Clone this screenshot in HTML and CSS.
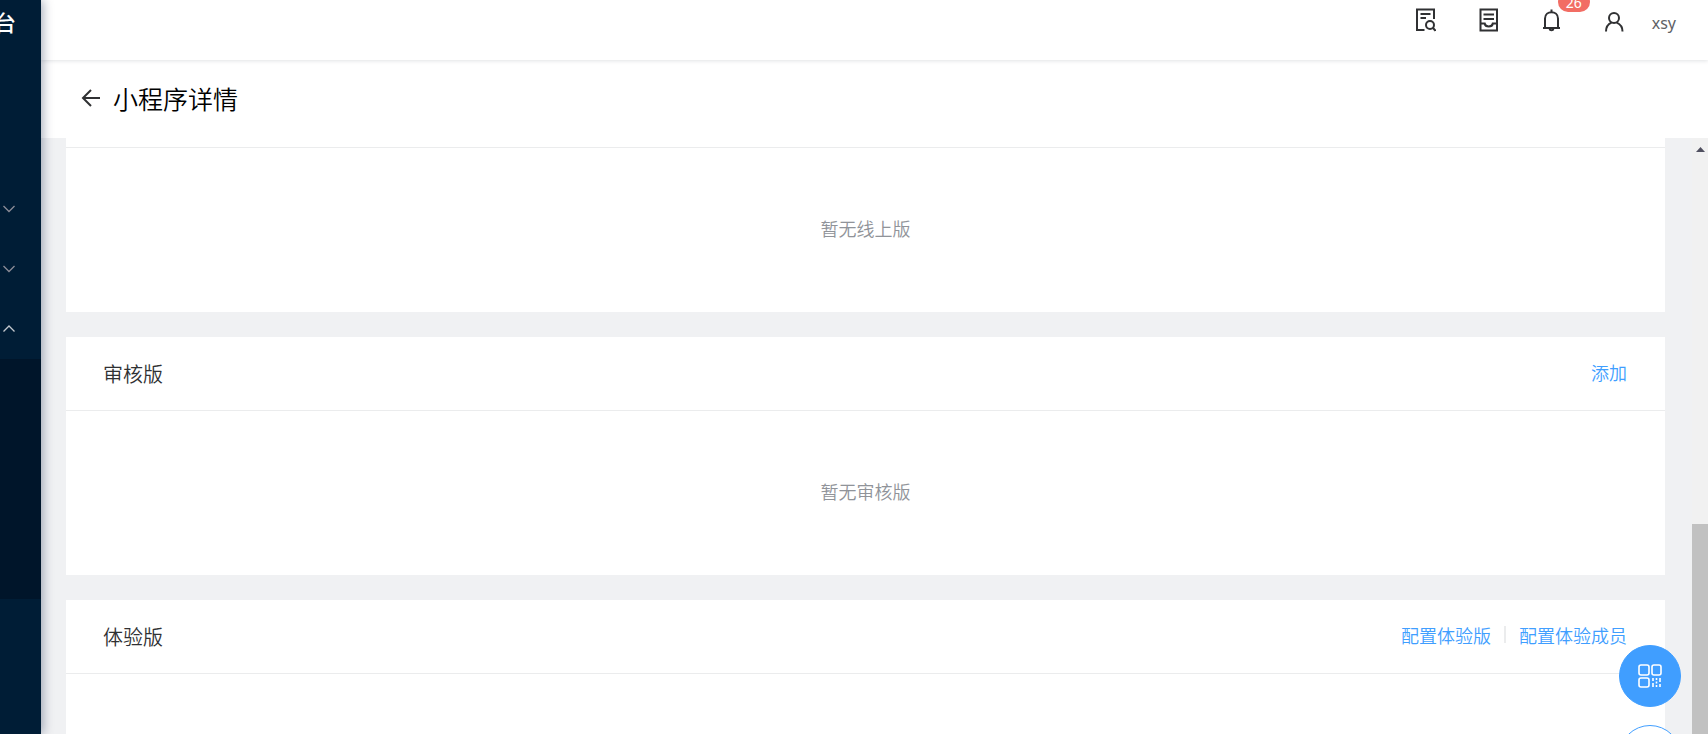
FILE: index.html
```html
<!DOCTYPE html>
<html lang="zh-CN">
<head>
  <meta charset="UTF-8">
  <title>小程序详情</title>
  <link rel="stylesheet" href="styles.css">
</head>
<body>
  <div class="layout">
    <aside class="sidebar">
      <div class="logo">台</div>
      <nav class="menu">
        <button class="menu-item" aria-expanded="false"><svg width="12" height="8" viewBox="0 0 12 8"><path d="M.5 1 6 6.500 11.500 1"/></svg></button>
        <button class="menu-item" aria-expanded="false"><svg width="12" height="8" viewBox="0 0 12 8"><path d="M.5 1 6 6.500 11.500 1"/></svg></button>
        <button class="menu-item open" aria-expanded="true"><svg width="12" height="8" viewBox="0 0 12 8"><path d="M.5 6.500 6 1l5.500 5.500"/></svg></button>
        <div class="submenu"></div>
      </nav>
    </aside>

    <div class="main">
      <header class="topbar">
        <button class="tool">
          <svg width="20" height="24" viewBox="0 0 20 24"><path d="M8.500 22H1V1.500h17V11M4.500 6h10M4.500 10H10"/><circle cx="14" cy="17" r="4"/><path d="m17 20 2.500 2.800"/></svg>
        </button>
        <button class="tool">
          <svg width="20" height="24" viewBox="0 0 20 24"><path d="M1.500 1.500h16.500v21H1.500zM4.500 6.500h10.500M4.500 11h10.500M1.500 15.500h4.200c.6 4 7.500 4 8.100 0H18"/></svg>
        </button>
        <button class="tool">
          <svg width="20" height="24" viewBox="0 0 20 24"><path d="M1 20h17M3 20v-9.500c0-8.500 13-8.500 13 0V20M9.500 4V1.500M7.500 20.500c.4 2.300 3.600 2.300 4 0"/></svg>
          <span class="badge">26</span>
        </button>
        <button class="tool">
          <svg width="20" height="24" viewBox="0 0 20 24"><circle cx="9" cy="10" r="5"/><path d="M1 23.500c0-5 2.500-7.500 5.500-8.800M17.500 23.500c0-5-2.800-7.500-5.800-8.800"/></svg>
        </button>
        <span class="user">xsy</span>
      </header>

      <div class="page-head">
        <button class="back" aria-label="返回">
          <svg width="20" height="20" viewBox="0 0 20 20"><path d="M19 10H2M10 2l-8 8 8 8"/></svg>
        </button>
        <h1>小程序详情</h1>
      </div>

      <div class="scroller">
        <div class="cards">
          <section class="card">
            <div class="card-tail"></div>
            <div class="card-body">暂无线上版</div>
          </section>

          <section class="card">
            <div class="card-head">
              <h2>审核版</h2>
              <div class="links"><a href="#">添加</a></div>
            </div>
            <div class="card-body">暂无审核版</div>
          </section>

          <section class="card">
            <div class="card-head">
              <h2>体验版</h2>
              <div class="links">
                <a href="#">配置体验版</a>
                <i class="divider"></i>
                <a href="#">配置体验成员</a>
              </div>
            </div>
            <div class="card-body"></div>
          </section>
        </div>

        <div class="scrollbar">
          <div class="arrow-up"></div>
          <div class="thumb"></div>
        </div>
      </div>
    </div>
  </div>

  <div class="float-btns">
    <button class="float-btn primary">
      <svg width="24" height="24" viewBox="0 0 24 24">
        <rect x="1" y="1" width="10" height="10" rx="2"/>
        <rect x="14" y="1" width="9" height="10" rx="2"/>
        <rect x="1" y="14" width="10" height="9" rx="2"/>
        <path d="M15 14v3M15 19v4M18.500 14v2M18.500 17.500v2M18.500 21v2M22 14v4M22 20v3"/>
      </svg>
    </button>
    <button class="float-btn"></button>
  </div>
</body>
</html>
```
FILE: styles.css
```css
* {
  box-sizing: border-box;
}

body {
  margin: 0;
  height: 100vh;
  overflow: hidden;
  font-family: "Noto Sans", "Noto Sans CJK SC", sans-serif;
  font-weight: 350;
  color: #303133;
  background: #f0f1f3;
}

button {
  padding: 0;
  border: none;
  background: none;
  font: inherit;
  cursor: pointer;
}

svg {
  display: block;
  fill: none;
  stroke: currentColor;
  stroke-width: 2;
}

h1, h2 {
  margin: 0;
  font-weight: 350;
}

a {
  color: #409eff;
  text-decoration: none;
}

.layout {
  display: flex;
  height: 100%;
}

/* sidebar */
.sidebar {
  position: relative;
  z-index: 2;
  flex: none;
  width: 41px;
  background: #001d36;
  box-shadow: 2px 0 10px rgba(0, 21, 60, 0.35);
}

.logo {
  display: flex;
  justify-content: flex-end;
  height: 179px;
  padding: 5px 25px 0 0;
  color: #fff;
  font-size: 22px;
  font-weight: 500;
}

.menu-item {
  display: flex;
  align-items: center;
  justify-content: flex-end;
  width: 100%;
  height: 60px;
  padding-right: 26px;
  color: #8b8c97;
}

.menu-item svg {
  flex: none;
  stroke-width: 1.3;
}

.menu-item.open {
  color: #c3c8ce;
}

.submenu {
  height: 240px;
  background: #00152a;
}

/* header */
.main {
  display: flex;
  flex: 1;
  flex-direction: column;
  min-width: 0;
}

.topbar {
  position: relative;
  z-index: 1;
  display: flex;
  flex: none;
  justify-content: flex-end;
  gap: 43px;
  height: 60px;
  padding: 8px 32px 0 0;
  background: #fff;
  box-shadow: 0 1px 4px rgba(0, 21, 41, 0.12);
}

.tool {
  position: relative;
  width: 20px;
  height: 24px;
  color: #303133;
}

.badge {
  position: absolute;
  top: -16px;
  left: 16px;
  width: 32px;
  height: 20px;
  border-radius: 10px;
  background: #f26d64;
  color: #fff;
  font-size: 14px;
  font-weight: 400;
  line-height: 22px;
  text-align: center;
}

.user {
  margin-left: -16px;
  color: #606266;
  font-size: 16px;
  font-weight: 400;
  line-height: 30px;
}

.page-head {
  display: flex;
  flex: none;
  align-items: center;
  gap: 12px;
  height: 78px;
  padding: 0 0 2px 40px;
  background: #fff;
}

.back {
  color: #303133;
}

.page-head h1 {
  color: #000;
  font-size: 25px;
}

/* cards */
.scroller {
  display: flex;
  flex: 1;
  min-height: 0;
  overflow: hidden;
}

.cards {
  display: flex;
  flex: 1;
  flex-direction: column;
  gap: 25px;
  padding: 0 27px 0 25px;
}

.card {
  flex: none;
  background: #fff;
}

.card-tail {
  height: 10px;
  border-bottom: 1px solid #ebeced;
}

.card-head {
  display: flex;
  align-items: center;
  justify-content: space-between;
  height: 74px;
  padding: 0 38px 0 37px;
  border-bottom: 1px solid #ebeced;
}

.card-head h2 {
  font-size: 20px;
}

.links {
  display: flex;
  align-items: center;
  gap: 13px;
  padding-bottom: 4px;
  font-size: 18px;
}

.divider {
  width: 2px;
  height: 17px;
  background: #ebeced;
}

.card-body {
  display: flex;
  align-items: center;
  justify-content: center;
  height: 164px;
  padding-bottom: 4px;
  color: #909399;
  font-size: 18px;
}

.scrollbar {
  flex: none;
  width: 16px;
  background: #f1f1f1;
}

.arrow-up {
  height: 386px;
  padding: 9px 0 0 4px;
}

.arrow-up::before {
  content: "";
  display: block;
  width: 9px;
  height: 5px;
  background: #505060;
  clip-path: polygon(50% 0, 100% 100%, 0 100%);
}

.thumb {
  height: 100%;
  background: #c1c1c1;
}

/* floating buttons */
.float-btns {
  position: fixed;
  top: 645px;
  right: 27px;
  z-index: 5;
  display: flex;
  flex-direction: column;
  gap: 18px;
}

.float-btn {
  display: flex;
  align-items: center;
  justify-content: center;
  width: 62px;
  height: 62px;
  border: 1px solid #409eff;
  border-radius: 50%;
  background: #fff;
}

.float-btn.primary {
  background: #409eff;
  color: #fff;
}

.float-btn svg {
  stroke-width: 1.6;
}
```
